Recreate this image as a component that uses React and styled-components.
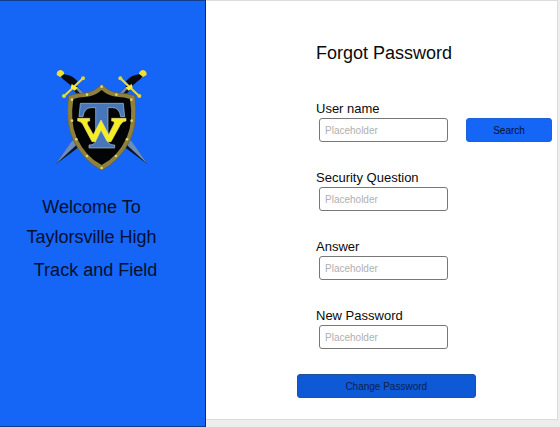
import React from "react";
import styled, { createGlobalStyle } from "styled-components";

const GlobalStyle = createGlobalStyle`
  * { box-sizing: border-box; }
  body {
    margin: 0;
    background: #ededed;
    color: #0a0a0a;
    font-family: "Liberation Sans", Arial, sans-serif;
  }
`;

const Page = styled.div`
  display: grid;
  grid-template-columns: 206px 1fr;
  min-height: 100vh;
`;

const Sidebar = styled.aside`
  display: flex;
  flex-direction: column;
  align-items: center;
  padding-top: 61px;
  background: #1565f7;
  border: 1px solid #123c8c;
  border-left: 0;
  border-right-color: #10295c;
`;

const Crest = styled.svg`
  display: block;
  width: 105px;
  height: 115px;
`;

const Welcome = styled.h2`
  display: flex;
  flex-direction: column;
  align-items: center;
  width: 100%;
  margin: 15px 0 0;
  padding-right: 22px;
  color: #051030;
  font-size: 18px;
  font-weight: 400;
  line-height: 30px;
`;

const TeamLine = styled.span`
  padding: 3px 0 0 8px;
`;

const Main = styled.main`
  margin: 0 2px 7px 0;
  padding: 40px 5px 20px 91px;
  background: #fff;
  border: 1px solid #dcdcdc;
  border-width: 1px 1px 1px 0;
`;

const Title = styled.h1`
  margin: 0 0 36px 19px;
  font-size: 18px;
  font-weight: 400;
  line-height: 24px;
`;

const Form = styled.form`
  display: flex;
  flex-direction: column;
`;

const Field = styled.div`
  margin: 0 0 28px 19px;
`;

const Label = styled.label`
  display: block;
  padding-bottom: 1px;
  font-size: 13px;
  line-height: 16px;
`;

const Controls = styled.div`
  display: grid;
  grid-template-columns: 3fr 2fr;
  column-gap: 18px;
  padding-left: 3px;
`;

const TextInput = styled.input`
  width: 100%;
  min-width: 0;
  height: 24px;
  padding: 0 5px;
  border: 1px solid #777;
  border-radius: 3px;
  background: #fff;
  font-family: inherit;
  font-size: 10px;
  &::placeholder { color: #b0b0b0; opacity: 1; }
`;

const Button = styled.button`
  height: 24px;
  padding: 0 6px;
  border: 1px solid ${(p) => (p.$strong ? "#24508f" : "#1b62dc")};
  border-radius: 3px;
  background: ${(p) => (p.$strong ? "#0d59d6" : "#1565f7")};
  color: ${(p) => (p.$strong ? "#0b2250" : "#051030")};
  font-family: inherit;
  font-size: 10px;
`;

const SubmitButton = styled(Button)`
  width: 70%;
  margin-top: -3px;
`;

function Sword() {
  return (
    <g>
      <path d="M62 76L76 67L246 242L293 307L230 260L220 250Z" fill="#0c1322" />
      <path d="M72 74L84 76L248 242L293 307L234 252Z" fill="#6f8cb8" />
      <path d="M32 42Q34 36 42 37Q66 39 83 58L68 76Q56 65 47 58Q37 51 32 42Z" fill="#080b10" />
      <path d="M21 40Q18 31 25 26Q34 21 41 29L43 35L31 45Z" fill="#f1df2e" />
      <path d="M42 103L68 78L99 49" fill="none" stroke="#ecdc35" strokeWidth="6" />
      <path d="M65 66L83 77L74 86L62 78Z" fill="#fff02e" />
      <circle cx="42" cy="102" r="6" fill="#dfd53b" />
      <circle cx="99" cy="49" r="6" fill="#dfd53b" />
    </g>
  );
}

const RIVETS = [[155, 74], [111, 98], [199, 98], [66, 113], [244, 113], [66, 176], [245, 176], [79, 232], [231, 232], [111, 282], [198, 282], [155, 318]];

function TeamCrest() {
  return (
    <Crest viewBox="0 0 315 345" role="img" aria-label="Taylorsville Warriors crest">
      <Sword />
      <g transform="matrix(-1 0 0 1 310 0)"><Sword /></g>
      <path d="M155 66Q174 89 206 93Q230 94 254 101Q265 182 240 235Q209 297 155 325Q101 297 70 235Q45 182 56 101Q80 94 104 93Q136 89 155 66Z" fill="#8f803b" stroke="#5f5d3d" strokeWidth="2" />
      <path d="M155 84Q174 102 205 105Q223 105 240 111Q251 181 230 227Q203 284 155 309Q107 284 80 227Q59 181 70 111Q87 105 105 105Q136 102 155 84Z" fill="#030405" />
      {RIVETS.map(([x, y]) => (
        <circle key={`${x}-${y}`} cx={x} cy={y} r="4" fill="#ded765" />
      ))}
      <path d="M91 124H220L224 164H212Q208 137 188 137H174V234Q174 249 194 249V258H117V249Q137 249 137 234V137H123Q103 137 99 164H87Z" fill="#4777b9" stroke="#acbfd4" strokeWidth="2" />
      <path d="M83 169H119V177Q108 177 113 188L130 218L153 174L176 218L191 188Q197 177 185 177V169H228V177Q217 177 210 190L183 239H172L153 204L136 239H126L99 188Q93 177 83 177Z" fill="#f7ee20" stroke="#e4dda0" strokeWidth="2" />
    </Crest>
  );
}

function TextField({ id, label, type = "text", children }) {
  return (
    <Field>
      <Label htmlFor={id}>{label}</Label>
      <Controls>
        <TextInput id={id} type={type} placeholder="Placeholder" />
        {children}
      </Controls>
    </Field>
  );
}

export default function App() {
  return (
    <>
      <GlobalStyle />
      <Page>
        <Sidebar>
          <TeamCrest />
          <Welcome>
            <span>Welcome To</span>
            <span>Taylorsville High</span>
            <TeamLine>Track and Field</TeamLine>
          </Welcome>
        </Sidebar>
        <Main>
          <Title>Forgot Password</Title>
          <Form onSubmit={(e) => e.preventDefault()}>
            <TextField id="username" label="User name">
              <Button type="button">Search</Button>
            </TextField>
            <TextField id="question" label="Security Question" />
            <TextField id="answer" label="Answer" />
            <TextField id="new-password" label="New Password" type="password" />
            <SubmitButton type="submit" $strong>Change Password</SubmitButton>
          </Form>
        </Main>
      </Page>
    </>
  );
}
